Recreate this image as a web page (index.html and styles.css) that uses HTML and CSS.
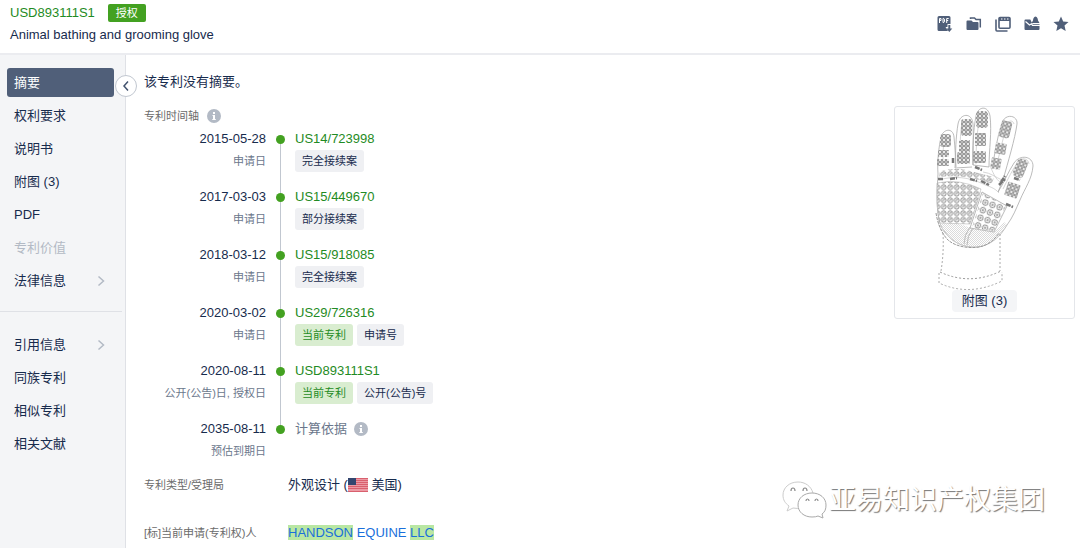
FILE: index.html
```html
<!DOCTYPE html>
<html lang="zh-CN">
<head>
    <meta charset="utf-8">
    <title>USD893111S1</title>
    <link rel="stylesheet" href="styles.css">
</head>
<body>
    <header class="header">
        <div class="heading">
            <div class="number-row">
                <a class="link" href="#">USD893111S1</a>
                <span class="badge">授权</span>
            </div>
            <h1 class="title">Animal bathing and grooming glove</h1>
        </div>
        <div class="tools">
            <button class="tool" aria-label="PDF">
                <svg width="16" height="16" viewBox="0 0 16 16">
                    <path fill="currentColor" d="M2 0h10a1.500 1.500 0 0 1 1.500 1.500V8h-3v3H8.500l2.500 4H2A1.500 1.500 0 0 1 .5 13.500v-12A1.500 1.500 0 0 1 2 0z"/>
                    <path fill="none" stroke="#fff" d="M2.500 7V2.500h1.500v2H2.500M6 2.500v4h.8l.7-.7V3.200l-.7-.7zM9.700 7V2.500h2M9.700 4.500h1.500"/>
                    <path fill="currentColor" d="M11.300 9h2v3.500h2L12.300 16 9.300 12.500h2z"/>
                </svg>
            </button>
            <button class="tool" aria-label="文件夹">
                <svg width="16" height="16" viewBox="0 0 16 16">
                    <path fill="currentColor" d="M1.500 4.500h4L7 6h4.500a1 1 0 0 1 1 1v6a1 1 0 0 1-1 1h-10a1 1 0 0 1-1-1V5.500a1 1 0 0 1 1-1z"/>
                    <path fill="none" stroke="currentColor" stroke-width="1.500" d="M4.500 3V2h4L10 3.500h4.300v8"/>
                </svg>
            </button>
            <button class="tool" aria-label="窗口">
                <svg width="16" height="16" viewBox="0 0 16 16">
                    <path fill="none" stroke="currentColor" stroke-width="1.600" d="M1 3.500v10.500a1 1 0 0 0 1 1h10.500M5 1.500h9a1 1 0 0 1 1 1v8.700a1 1 0 0 1-1 1H5a1 1 0 0 1-1-1V2.500a1 1 0 0 1 1-1z"/>
                    <path fill="currentColor" d="M4 1h11v4H4z"/>
                    <path fill="none" stroke="#fff" d="M6 3h1.500M9 3h1.500M12 3h1.500"/>
                </svg>
            </button>
            <button class="tool" aria-label="邮件提醒">
                <svg width="16" height="16" viewBox="0 0 16 16">
                    <path fill="currentColor" d="M1.500 3.500h4.800L8.500 8h7v5a1 1 0 0 1-1 1h-13a1 1 0 0 1-1-1V4.500a1 1 0 0 1 1-1z"/>
                    <path fill="none" stroke="#fff" stroke-width="1.200" d="M1.500 5.500 5.500 9 7.500 7.800l1 1.500H16"/>
                    <path fill="currentColor" d="M11.500.5c1.800.5 2.300 2 2.500 4l1.500 2.500h-8L9 4.500c.2-2 .7-3.500 2.500-4z"/>
                </svg>
            </button>
            <button class="tool" aria-label="收藏">
                <svg width="16" height="16" viewBox="0 0 16 16">
                    <path fill="currentColor" d="m8 .5 2.200 5 5.300.5-4 3.600 1.200 5.400L8 12.200 3.300 15l1.200-5.400L.5 6l5.300-.5z"/>
                </svg>
            </button>
        </div>
    </header>

    <div class="page">
        <nav class="sidebar">
            <ul class="menu">
                <li><a class="menu-item active" href="#">摘要</a></li>
                <li><a class="menu-item" href="#">权利要求</a></li>
                <li><a class="menu-item" href="#">说明书</a></li>
                <li><a class="menu-item" href="#">附图 (3)</a></li>
                <li><a class="menu-item" href="#">PDF</a></li>
                <li><a class="menu-item disabled">专利价值</a></li>
                <li><a class="menu-item" href="#">法律信息
                    <svg class="chevron" width="8" height="12" viewBox="0 0 8 12"><path d="m1.500 1.500 5 4.500-5 4.500"/></svg></a></li>
            </ul>
            <hr class="divider">
            <ul class="menu">
                <li><a class="menu-item" href="#">引用信息
                    <svg class="chevron" width="8" height="12" viewBox="0 0 8 12"><path d="m1.500 1.500 5 4.500-5 4.500"/></svg></a></li>
                <li><a class="menu-item" href="#">同族专利</a></li>
                <li><a class="menu-item" href="#">相似专利</a></li>
                <li><a class="menu-item" href="#">相关文献</a></li>
            </ul>
            <button class="collapse" aria-label="收起">
                <svg width="8" height="12" viewBox="0 0 8 12"><path d="M6 1.500 2 6l4 4.500"/></svg>
            </button>
        </nav>

        <main class="main">
            <div class="content">
                <p class="abstract">该专利没有摘要。</p>
                <h2 class="label timeline-label">专利时间轴
                    <svg class="info" width="14" height="14" viewBox="0 0 14 14"><circle cx="7" cy="7" r="7"/><path d="M6 3h2v2H6zM5.500 6H8v4h.8v1H5.300v-1H6V7h-.5z"/></svg>
                </h2>
                <ol class="timeline">
                    <li class="event">
                        <div class="when"><time>2015-05-28</time><span class="what">申请日</span></div>
                        <div class="marker"><i class="dot"></i></div>
                        <div class="detail"><a class="link" href="#">US14/723998</a>
                            <div class="tags"><span class="tag">完全接续案</span></div></div>
                    </li>
                    <li class="event">
                        <div class="when"><time>2017-03-03</time><span class="what">申请日</span></div>
                        <div class="marker"><i class="dot"></i></div>
                        <div class="detail"><a class="link" href="#">US15/449670</a>
                            <div class="tags"><span class="tag">部分接续案</span></div></div>
                    </li>
                    <li class="event">
                        <div class="when"><time>2018-03-12</time><span class="what">申请日</span></div>
                        <div class="marker"><i class="dot"></i></div>
                        <div class="detail"><a class="link" href="#">US15/918085</a>
                            <div class="tags"><span class="tag">完全接续案</span></div></div>
                    </li>
                    <li class="event">
                        <div class="when"><time>2020-03-02</time><span class="what">申请日</span></div>
                        <div class="marker"><i class="dot"></i></div>
                        <div class="detail"><a class="link" href="#">US29/726316</a>
                            <div class="tags"><span class="tag current">当前专利</span><span class="tag">申请号</span></div></div>
                    </li>
                    <li class="event">
                        <div class="when"><time>2020-08-11</time><span class="what">公开(公告)日, 授权日</span></div>
                        <div class="marker"><i class="dot"></i></div>
                        <div class="detail"><a class="link" href="#">USD893111S1</a>
                            <div class="tags"><span class="tag current">当前专利</span><span class="tag">公开(公告)号</span></div></div>
                    </li>
                    <li class="event">
                        <div class="when"><time>2035-08-11</time><span class="what">预估到期日</span></div>
                        <div class="marker"><i class="dot"></i></div>
                        <div class="detail"><span class="basis">计算依据
                            <svg class="info" width="14" height="14" viewBox="0 0 14 14"><circle cx="7" cy="7" r="7"/><path d="M6 3h2v2H6zM5.500 6H8v4h.8v1H5.300v-1H6V7h-.5z"/></svg></span></div>
                    </li>
                </ol>
                <dl class="fields">
                    <dt class="label">专利类型/受理局</dt>
                    <dd>外观设计 (<svg class="flag" width="20" height="14" viewBox="0 0 20 14"><path fill="#ec9aa4" d="M0 0h20v14H0z"/><path stroke="#d9606e" d="M0 .5h20M0 2.500h20M0 4.500h20M0 6.500h20M0 8.500h20M0 10.500h20M0 13.500h20"/><path fill="#34466f" d="M0 0h8v7H0z"/></svg> 美国)</dd>
                    <dt class="label">[标]当前申请(专利权)人</dt>
                    <dd><a class="owner" href="#"><mark>HANDSON</mark> EQUINE <mark>LLC</mark></a></dd>
                </dl>
            </div>

            <figure class="figure">
                <svg class="glove" width="101" height="183" viewBox="0 1 101 183">
                    <defs>
                        <pattern id="grip" width="4" height="4" patternUnits="userSpaceOnUse">
                            <rect width="4" height="4" fill="#ccc"/>
                            <rect x=".5" y=".5" width="3" height="3" rx="1" fill="#e8e8e8" stroke="#777" stroke-width=".8"/>
                        </pattern>
                        <pattern id="studs" width="6.500" height="6.500" patternUnits="userSpaceOnUse">
                            <circle cx="3.200" cy="3.200" r="2.500" fill="#eee" stroke="#8a8a8a" stroke-width=".9"/>
                            <path d="M2.500 4q0-2 2-1.500" fill="none" stroke="#888" stroke-width=".8"/>
                        </pattern>
                        <pattern id="pad" width="7.500" height="8" patternUnits="userSpaceOnUse" patternTransform="rotate(18)">
                            <circle cx="3.700" cy="4" r="2.800" fill="#eee" stroke="#8a8a8a" stroke-width=".9"/>
                            <circle cx="3.700" cy="4" r="1" fill="#999"/>
                        </pattern>
                        <pattern id="knit" width="2" height="2" patternUnits="userSpaceOnUse">
                            <path d="M0 .5h1M1 1.500h1" stroke="#ccc" stroke-width=".7"/>
                        </pattern>
                    </defs>
                    <g fill="#fff" stroke="#aaa" stroke-width=".8">
                        <path d="M4 68C3 55 5 40 7 31c2-8 12-10 13 0 1 11 2 21 1 31l17-1M22 61c-1-14 0-31 2-43 2-11 14-12 15 0 1 15-1 28 0 41l16 2M39 59c0-18 0-34 3-49 2-10 12-11 14 0 2 16-1 34-1 51M58 63c3-16 5-32 10-46 3-10 16-8 15 1-2 15-9 38-14 56l-5 12M64 86c6-9 10-20 16-29 6-9 19-7 19 3-1 13-8 22-13 34-4 9-7 17-13 25-7 12-16 20-29 22-15 1-26-5-33-15C3 118 2 98 4 68"/>
                        <path stroke="#ccc" d="M9 60c0-12 0-22 2-29M26 57c0-14 0-30 2-40 2-4 6-5 8 0M42 58c0-17 1-34 4-48 2-5 7-5 8 0M62 64c3-16 7-31 11-46 2-4 6-4 7 0M69 83c5-10 9-19 15-27 4-5 10-4 11 2M5 74c16-5 31-2 42 3 8 4 13 4 18 10M49 66c8 1 12 5 19 8M57 62c3 7 5 11 9 14"/>
                    </g>
                    <path fill="url(#knit)" d="M4 118q18-3 32 4l24 4 10-10 3 3c-8 13-18 20-30 22-15 1-31-6-39-23z"/>
                    <g fill="url(#grip)">
                        <rect x="6" y="28" width="11" height="13" rx="3"/>
                        <rect x="4" y="44" width="11" height="7" rx="1"/>
                        <rect x="3" y="53" width="12" height="7" rx="1"/>
                        <rect x="27" y="13" width="11" height="17" rx="3"/>
                        <rect x="25" y="34" width="11" height="12" rx="1"/>
                        <rect x="23" y="46" width="13" height="12" rx="2"/>
                        <rect x="42" y="5" width="12" height="17" rx="4"/>
                        <rect x="41" y="27" width="11" height="13" rx="1"/>
                        <rect x="39" y="45" width="13" height="12" rx="2"/>
                        <rect x="66" y="15" width="11" height="17" rx="3" transform="rotate(14 72 23)"/>
                        <rect x="61" y="37" width="11" height="11" rx="1" transform="rotate(10 66 43)"/>
                        <rect x="57" y="52" width="10" height="11" rx="1" transform="rotate(10 62 57)"/>
                        <rect x="81" y="53" width="11" height="19" rx="4" transform="rotate(22 87 62)"/>
                        <rect x="72" y="77" width="13" height="14" rx="1" transform="rotate(18 78 84)"/>
                    </g>
                    <path fill="url(#studs)" stroke="#bbb" stroke-width=".6" d="M3 77q22-5 44 6l-2 8-9 27-31-1q-3-20-2-40z"/>
                    <path fill="url(#studs)" d="M6 65q18-4 30 0l24 6-2 7q-25-10-53-7z"/>
                    <path fill="#fff" stroke="#aaa" stroke-width=".8" d="m48 86 25 14-13 26-24-4z"/>
                    <path fill="url(#pad)" d="m49 87 23 13-12 25-22-3z"/>
                    <path fill="none" stroke="#777" stroke-width="2.500" stroke-dasharray="5 1" d="m4 73 6 0M16 73l7-1M36 73l7 2M47 75l8 4M41 61l7 3M65 79l6-6M67 76l4-6M72 98l7 3M80 72l6 2M19 52v6"/>
                    <path fill="none" stroke="#bbb" d="M36 121q-6 8-6 17M39 122q-6 8-6 17"/>
                    <path fill="none" stroke="#999" stroke-width="1" stroke-dasharray="3 1" d="M2 107c2 13 7 22 12 27 9 8 26 9 35 6q9-3 16-13"/>
                    <g fill="none" stroke="#aaa" stroke-dasharray="2 2">
                        <path d="M9 127q1 20-2 38M66 128v37M5 167v10q30 14 63-2v-9"/>
                        <path stroke="#999" d="M6 166q30 14 61-1"/>
                    </g>
                </svg>
                <button class="figure-button">附图 (3)</button>
            </figure>
        </main>
    </div>

    <div class="watermark">
        <svg width="46" height="40" viewBox="0 0 46 40">
            <g fill="#fff" stroke="#aaa" stroke-width="1">
                <path stroke="#ccc" d="M17 2C8 2 2 8 2 15c0 5 2 8 6 11l-2 5 6-3q5 1 9 0c9-2 13-7 11-15C30 6 24 2 17 2z"/>
                <path d="M31 13c-8 0-14 5-14 12s6 12 14 12q4 0 6-1l5 2-1-4c3-2 4-5 4-9 0-7-6-12-14-12z"/>
            </g>
            <path fill="none" stroke="#888" stroke-width="1.200" d="M10 11q0-3 2-3t2 3M22 11q0-3 2-3t2 3M25 21q0-2 1.500-2t1.500 2M34 21q0-2 1.500-2t1.500 2"/>
        </svg>
        <span>亚易知识产权集团</span>
    </div>
</body>
</html>
```
FILE: styles.css
```css
* {
    box-sizing: border-box;
}
body {
    margin: 0;
    min-height: 100vh;
    display: flex;
    flex-direction: column;
    background: #fff;
    color: #172b4d;
    font-family: "Liberation Sans", "Noto Sans CJK SC", sans-serif;
    font-size: 13px;
    line-height: 20px;
}
h1, h2, p, ul, ol, dl, dd, figure {
    margin: 0;
    padding: 0;
}
ul, ol {
    list-style: none;
}
a {
    color: inherit;
    text-decoration: none;
}
button {
    font: inherit;
    color: inherit;
    border: 0;
    padding: 0;
    cursor: pointer;
}
.link {
    color: #1f8b24;
}

/* header */
.header {
    display: flex;
    justify-content: space-between;
    padding: 2px 11px 7px 10px;
    border-bottom: 2px solid #ebecf0;
}
.number-row {
    display: flex;
    align-items: center;
    gap: 13px;
    height: 22px;
}
.badge {
    padding: 0 8px;
    border-radius: 2px;
    background: #43a121;
    color: #fff;
    font-size: 11px;
    line-height: 18px;
}
.title {
    font-size: 13px;
    font-weight: normal;
    line-height: 22px;
}
.tools {
    display: flex;
    align-items: center;
    gap: 13px;
    color: #505f79;
}
.tool {
    display: flex;
    background: none;
}

/* sidebar */
.page {
    flex: 1;
    display: flex;
}
.sidebar {
    position: relative;
    flex: none;
    width: 126px;
    padding: 13px 11px 0 7px;
    border-right: 1px solid #dfe1e6;
    background: #f4f5f7;
}
.menu {
    display: flex;
    flex-direction: column;
    gap: 4px;
}
.menu-item {
    display: flex;
    align-items: center;
    justify-content: space-between;
    padding: 0 9px 0 7px;
    border-radius: 3px;
    line-height: 29px;
}
.active {
    background: #505f79;
    color: #fff;
}
.disabled {
    color: #b3bac5;
}
.chevron, .collapse svg {
    fill: none;
    stroke: #b3bac5;
    stroke-width: 1.5;
}
.divider {
    margin: 16px -8px 18px -7px;
    border: 0;
    border-top: 1px solid #dfe1e6;
}
.collapse {
    position: absolute;
    top: 20px;
    right: -12px;
    display: flex;
    align-items: center;
    justify-content: center;
    width: 22px;
    height: 22px;
    border: 1px solid #c1c7d0;
    border-radius: 50%;
    background: #fff;
}
.collapse svg {
    stroke: #42526e;
}

/* main */
.main {
    flex: 1;
    display: flex;
    align-items: flex-start;
    padding: 17px 5px 5px 18px;
}
.content {
    flex: 1;
}
.label {
    color: #6b6b6b;
    font-size: 11px;
    font-weight: normal;
}
.timeline-label {
    display: flex;
    align-items: center;
    gap: 8px;
    margin: 14px 0 3px;
}
.info {
    fill: #b3bac5;
}
.info path {
    fill: #fff;
}
.event {
    display: grid;
    grid-template-columns: 122px 29px 1fr;
    min-height: 58px;
}
.when {
    display: flex;
    flex-direction: column;
    text-align: right;
}
.what {
    color: #6b778c;
    font-size: 11px;
    line-height: 24px;
}
.marker {
    display: flex;
    flex-direction: column;
    align-items: center;
}
.marker::before, .marker::after {
    content: "";
    width: 1px;
    height: 6px;
    background: #c1c7d0;
}
.marker::after {
    flex: 1;
}
.event:first-child .marker::before, .event:last-child .marker::after {
    background: none;
}
.event:last-child {
    min-height: 0;
}
.dot {
    width: 9px;
    height: 9px;
    border-radius: 50%;
    background: #43a121;
}
.tags {
    display: flex;
    gap: 4px;
    margin-top: 1px;
}
.tag {
    padding: 0 7px;
    border-radius: 3px;
    background: #eff0f3;
    font-size: 11px;
    line-height: 22px;
}
.current {
    background: #d9edd0;
    color: #1f8b24;
}
.basis {
    display: flex;
    align-items: center;
    gap: 7px;
    color: #6b778c;
}
.fields {
    display: grid;
    grid-template-columns: 144px 1fr;
    row-gap: 28px;
    margin-top: 12px;
}
.flag {
    vertical-align: -3px;
}
.owner {
    color: #1a6fdb;
}
mark {
    background: #b9e7a3;
    color: inherit;
}

/* drawing thumbnail */
.figure {
    display: flex;
    flex-direction: column;
    align-items: center;
    width: 181px;
    margin-top: 34px;
    padding-bottom: 6px;
    border: 1px solid #e4e6ea;
    border-radius: 3px;
}
.figure-button {
    padding: 0 10px;
    border-radius: 4px;
    background: #f4f5f7;
    line-height: 22px;
}

.watermark {
    position: absolute;
    right: 35px;
    bottom: 28px;
    display: flex;
    align-items: center;
    gap: 2px;
    color: #fff;
    font-size: 27px;
    line-height: 40px;
    text-shadow: 1px 1px 1px #777;
}
```
